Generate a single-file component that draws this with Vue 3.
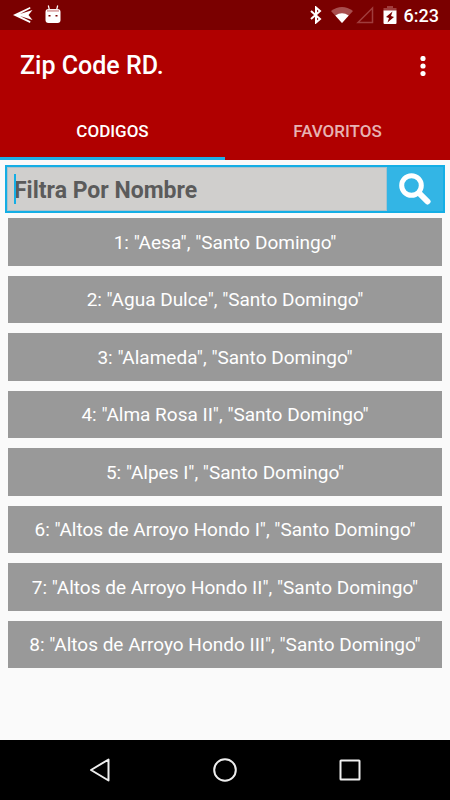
<script setup>
import { computed, ref } from 'vue';

const tabs = ['CODIGOS', 'FAVORITOS'];
const activeTab = ref('CODIGOS');
const filter = ref('');
const focused = ref(false);

const places = [
  { id: 1, name: 'Aesa', city: 'Santo Domingo' },
  { id: 2, name: 'Agua Dulce', city: 'Santo Domingo' },
  { id: 3, name: 'Alameda', city: 'Santo Domingo' },
  { id: 4, name: 'Alma Rosa II', city: 'Santo Domingo' },
  { id: 5, name: 'Alpes I', city: 'Santo Domingo' },
  { id: 6, name: 'Altos de Arroyo Hondo I', city: 'Santo Domingo' },
  { id: 7, name: 'Altos de Arroyo Hondo II', city: 'Santo Domingo' },
  { id: 8, name: 'Altos de Arroyo Hondo III', city: 'Santo Domingo' },
];

const favorites = ref([]);

const visiblePlaces = computed(() => {
  const source = activeTab.value === 'CODIGOS' ? places : favorites.value;
  const text = filter.value.trim().toLowerCase();
  return source.filter((place) => place.name.toLowerCase().includes(text));
});
</script>

<template>
  <div class="screen">
    <div class="status-bar">
      <div class="status-group notifications">
        <svg class="icon-plane" viewBox="0 0 20 18">
          <path
            d="M0 10L17 2l0.500 1.500L7 9l12.500-4L15.500 10l4 5L7 11l10.500 5.300L17 18z"
            fill="#fff"
          />
        </svg>
        <svg class="icon-robot" viewBox="0 0 16 19">
          <path d="M3.300 0.500l1 4M12.700 0.500l-1 4" stroke="#fff" stroke-width="1.200" />
          <path d="M0.500 7q0-3 3-3h9q3 0 3 3v8q0 3-3 3h-9q-3 0-3-3z" fill="#fff" />
          <path d="M2 4.800h12v2H2z" fill="#dcaaaa" />
          <path d="M3.500 10h2v1.500h-2zM10.500 10h2v1.500h-2z" fill="#7a0000" />
        </svg>
      </div>
      <div class="status-group">
        <svg class="icon-bluetooth" viewBox="0 0 12 18">
          <path
            d="M1 5l9 8-4 3.500V1.500L10 5 1 13"
            fill="none"
            stroke="#fff"
            stroke-width="2"
          />
        </svg>
        <div class="network">
          <svg class="icon-wifi" viewBox="0 0 22 18">
            <path d="M0 5Q11-3 22 5L11 17z" fill="#a84e4e" />
            <path d="M4.300 9.600Q11 5 17.700 9.600L11 17z" fill="#fff" />
          </svg>
          <svg class="icon-signal" viewBox="0 0 18 18">
            <path d="M16.500 2v14.500H2z" fill="none" stroke="#a03c3c" stroke-width="1.500" />
          </svg>
        </div>
        <div class="power">
          <svg class="icon-battery" viewBox="0 0 14 18">
            <path d="M0.500 5V2h3.500V0h6v2h3.500v3z" fill="#a03c3c" />
            <path d="M0.500 4.500h13V17q0 1-1 1h-11q-1 0-1-1z" fill="#fff" />
            <path d="M9.500 5.500L3 11l3 1-1.500 4.500L11 11l-3-1z" fill="#7a0000" />
          </svg>
          <span class="clock">6:23</span>
        </div>
      </div>
    </div>

    <header class="app-header">
      <div class="toolbar">
        <h1 class="title">Zip Code RD.</h1>
        <button type="button" class="menu-btn" aria-label="Menu">
          <svg class="icon-more" viewBox="0 0 6 20">
            <circle cx="3" cy="2.500" r="2.600" />
            <circle cx="3" cy="10" r="2.600" />
            <circle cx="3" cy="17.500" r="2.600" />
          </svg>
        </button>
      </div>
      <nav class="tabs">
        <button
          v-for="tab in tabs"
          :key="tab"
          type="button"
          :class="['tab', { active: tab === activeTab }]"
          @click="activeTab = tab"
        >
          {{ tab }}
        </button>
      </nav>
    </header>

    <main class="content">
      <form class="search" @submit.prevent>
        <div class="field">
          <input
            v-model="filter"
            type="text"
            class="search-input"
            placeholder="Filtra Por Nombre"
            aria-label="Filtra Por Nombre"
            @focus="focused = true"
            @blur="focused = false"
          />
          <span v-if="!filter && !focused" class="caret"></span>
        </div>
        <button type="submit" class="search-btn" aria-label="Buscar">
          <svg class="icon-search" viewBox="0 0 32 32">
            <circle cx="12.500" cy="12.500" r="9.800" fill="none" stroke="#fff" stroke-width="5" />
            <path d="M20 20l8.500 8.500" stroke="#fff" stroke-width="6" stroke-linecap="round" />
          </svg>
        </button>
      </form>

      <ul class="list">
        <li v-for="place in visiblePlaces" :key="place.id" class="list-row">
          <button type="button" class="place">
            {{ place.id }}: "{{ place.name }}", "{{ place.city }}"
          </button>
        </li>
      </ul>
    </main>

    <nav class="nav-bar">
      <button type="button" class="nav-btn" aria-label="Back">
        <svg class="icon-nav" viewBox="0 0 26 26">
          <path d="M21.500 2.500v21L4 13z" />
        </svg>
      </button>
      <button type="button" class="nav-btn" aria-label="Home">
        <svg class="icon-nav" viewBox="0 0 26 26">
          <circle cx="13" cy="13" r="10.800" />
        </svg>
      </button>
      <button type="button" class="nav-btn" aria-label="Recents">
        <svg class="icon-nav" viewBox="0 0 26 26">
          <rect x="3.500" y="3.500" width="19" height="19" rx="0.500" />
        </svg>
      </button>
    </nav>
  </div>
</template>

<style>
body {
  margin: 0;
  background: #fafafa;
}
</style>

<style scoped>
.screen {
  display: flex;
  flex-direction: column;
  min-height: 100vh;
  background: #fafafa;
  font-family: Roboto, 'Liberation Sans', sans-serif;
}
button {
  margin: 0;
  padding: 0;
  border: none;
  border-radius: 0;
  background: none;
  color: inherit;
  font-family: inherit;
  cursor: pointer;
}
svg {
  display: block;
}
.status-bar {
  display: flex;
  justify-content: space-between;
  align-items: center;
  height: 30px;
  padding: 0 11px 0 13px;
  background: #7a0000;
  color: #fff;
}
.status-group {
  display: flex;
  align-items: center;
  gap: 9px;
}
.notifications {
  gap: 12px;
  padding-bottom: 2px;
}
.network {
  display: flex;
  gap: 3px;
}
.power {
  display: flex;
  align-items: center;
  gap: 7px;
}
.icon-plane {
  width: 20px;
  height: 18px;
}
.icon-robot {
  width: 16px;
  height: 19px;
}
.icon-bluetooth {
  width: 12px;
  height: 18px;
}
.icon-wifi {
  width: 22px;
  height: 18px;
}
.icon-signal {
  width: 18px;
  height: 18px;
}
.icon-battery {
  width: 14px;
  height: 18px;
}
.clock {
  font-size: 18px;
  font-weight: 500;
}
.app-header {
  background: #b00000;
  color: #fff;
}
.toolbar {
  display: flex;
  justify-content: space-between;
  align-items: center;
  height: 71px;
  padding: 0 12px 0 20px;
}
.title {
  margin: 0;
  font-size: 25px;
  font-weight: 500;
}
.menu-btn {
  display: flex;
  justify-content: center;
  align-items: center;
  width: 30px;
  height: 40px;
}
.icon-more {
  width: 6px;
  height: 20px;
  fill: #fff;
}
.tabs {
  display: grid;
  grid-template-columns: 1fr 1fr;
  height: 59px;
}
.tab {
  border-top: 3px solid transparent;
  border-bottom: 3px solid transparent;
  color: #e7b3b3;
  font-size: 17px;
  font-weight: 500;
}
.tab.active {
  border-bottom-color: #20aee6;
  color: #fff;
}
.content {
  flex: 1;
  padding: 5px;
}
.search {
  display: flex;
  height: 44px;
  border: 2px solid #14aee5;
  background: #33b5e5;
}
.field {
  position: relative;
  flex: 1;
  display: flex;
}
.search-input {
  flex: 1;
  min-width: 0;
  padding: 2px 6px 0;
  border: 1px solid #a9c3cd;
  border-radius: 0;
  outline: none;
  background: #d0cfcd;
  color: #555;
  font-family: inherit;
  font-size: 23px;
  font-weight: 700;
}
.search-input::placeholder {
  color: #5b5b5b;
  opacity: 1;
}
.caret {
  position: absolute;
  top: 7px;
  left: 7px;
  width: 2px;
  height: 30px;
  background: #14aee5;
}
.search-btn {
  display: flex;
  justify-content: center;
  align-items: center;
  width: 56px;
}
.icon-search {
  width: 32px;
  height: 32px;
}
.list {
  display: grid;
  grid-auto-rows: 1fr;
  gap: 10px;
  min-height: 450px;
  margin: 5px 3px 0;
  padding: 0;
  list-style: none;
}
.list-row {
  display: flex;
}
.place {
  flex: 1;
  padding-top: 1px;
  background: #999;
  color: #fff;
  font-size: 19px;
}
.nav-bar {
  display: flex;
  justify-content: center;
  align-items: center;
  gap: 65px;
  height: 60px;
  background: #000;
}
.nav-btn {
  padding: 17px;
}
.icon-nav {
  width: 26px;
  height: 26px;
  fill: none;
  stroke: #eee;
  stroke-width: 2;
  stroke-linejoin: round;
}
</style>
